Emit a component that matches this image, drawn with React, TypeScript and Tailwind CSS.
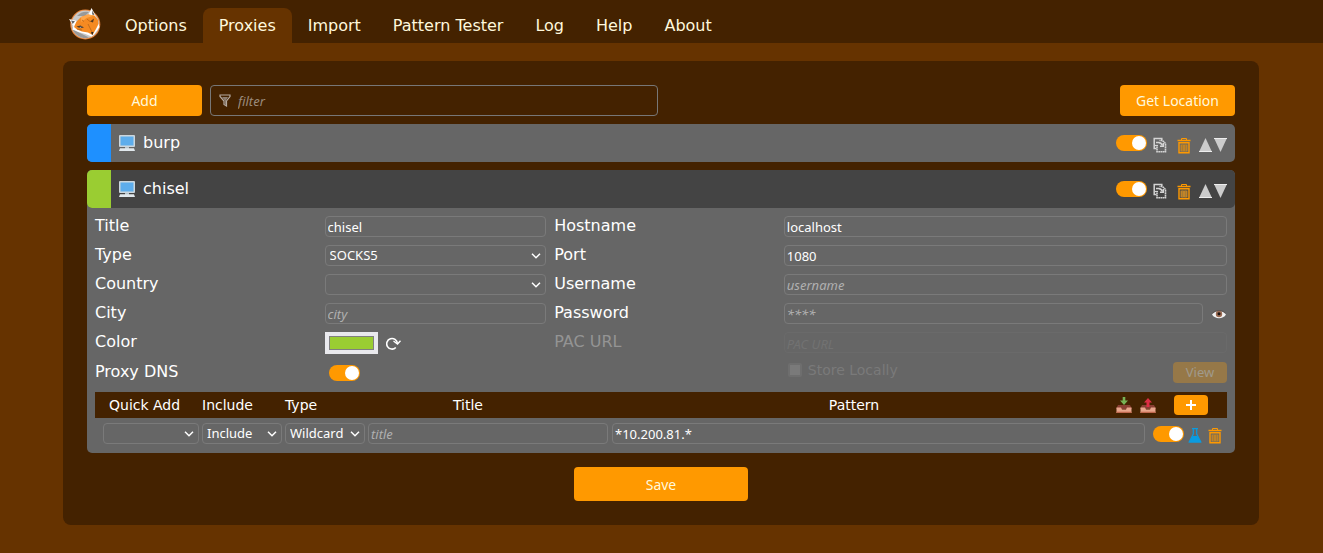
import { useId, useState, type InputHTMLAttributes, type ReactNode } from "react";

const boxClass =
  "block h-[21px] w-full min-w-0 rounded-[4px] border bg-transparent font-['Noto_Sans',sans-serif] text-[13px] leading-[19px] text-white outline-none placeholder:italic";
const fieldClass = `${boxClass} border-[#7a7a7a] pl-[2px] placeholder:text-[#b0b0b0]`;
const buttonClass =
  "rounded-[4px] bg-[#ff9900] font-['Noto_Sans',sans-serif] text-[14px] text-[#fff8dc]";

function FoxLogo() {
  return (
    <svg viewBox="0 0 34 34" className="size-[34px]" aria-hidden="true">
      <circle cx="17.3" cy="17.5" r="15" fill="#e8853b" />
      <circle cx="17.3" cy="17.5" r="13.9" fill="#c9c9c9" />
      <path d="M4 20a13.500 13.500 0 0 0 17 10.500L8 24z" fill="#9a9a9a" />
      <path d="M9 9a12.500 12.500 0 0 1 12-4l-4 4z" fill="#999" />
      <path d="M1 12l8 2-3 6z" fill="#fff" />
      <path d="M3 13.500l4 .8-2.300 2.700z" fill="#666" />
      <path d="M20.500 8l3-7 3.800 7 .3 3z" fill="#fff" />
      <path d="M24.300 3.500l2.200 4.500-2.300-.5z" fill="#555" />
      <path d="M5.500 19l-1 3.500 6 2.500 7 2 6 2.500 3-2.500 5-7-1-3.500z" fill="#fff" />
      <path d="M6 20l2.500-5.500L13 10l7-2.500 6.500 1L30 13l.5 4-2.500 5-3.500 6-4.500-2.500-6-1-5-2z" fill="#f58a22" />
      <path d="M13 10l7-2.500 6.500 1-8 2.500-5 4z" fill="#ffa64a" />
      <path d="M8.500 19.500l4-1 3.500 2-4 .8z" fill="#4a3a2c" />
      <path d="M11 20l3-.3-1.500 1z" fill="#ddd" />
      <path d="M22 14.500l4-3-1 4z" fill="#5a3a20" />
      <path d="M14 13l2 1.500M19 12l3 2.500M20 17l4 8M9 22l5 1" stroke="#b86416" strokeWidth="0.8" fill="none" />
      <path d="M22.800 25.500l2.700-.8-1 3.300z" fill="#222" />
    </svg>
  );
}

function MonitorIcon() {
  return (
    <svg viewBox="0 0 16 16" className="size-4 shrink-0" aria-hidden="true">
      <rect width="16" height="12" rx="1" fill="#ccd6dd" />
      <rect x="1.500" y="1.500" width="13" height="9" fill="#5dadec" />
      <path d="M6 12h4v2H6z" fill="#b8c5cd" />
      <path d="M1 13.200h14l1 2.800H0z" fill="#e1e8ed" />
    </svg>
  );
}

function FilterIcon() {
  return (
    <svg viewBox="0 0 12 13" className="h-[13px] w-3" fill="none" aria-hidden="true">
      <path d="M1 1h10v1.500L7.500 7v5L5 10.500V7L1 2.500z" stroke="#b5aaa0" strokeWidth="1.200" />
      <path d="M3 3h6L7 6.500v5L5.500 10V6.500z" fill="#8a7c70" />
    </svg>
  );
}

function CopyIcon() {
  return (
    <svg viewBox="0 0 14 16" className="h-4 w-3.5" fill="none" stroke="#d4d4d4" aria-hidden="true">
      <path d="M3.500 11.500H1.200v-10h7.600V3" strokeWidth="1.500" />
      <path d="M4 9.500v5.300h8.500V6.500l-3-3H6.500" strokeWidth="1.600" strokeDasharray="1.800 0.400" />
      <path d="M3 5.500h2.500c2 0 3 .8 4 3" strokeWidth="1.600" />
      <path d="M10.300 6v3.200H7" strokeWidth="1.500" />
      <path d="M2 8.500h3" strokeWidth="1.200" />
    </svg>
  );
}

function TrashIcon() {
  return (
    <svg viewBox="0 0 14 17" className="h-[17px] w-3.5" fill="none" stroke="#ff9900" aria-hidden="true">
      <path d="M0.500 3.500h13" strokeWidth="1.500" />
      <path d="M4.500 3V1.500h5V3" strokeWidth="1" />
      <path d="M2 5.800h10v10H2z" strokeWidth="1.400" />
      <path d="M3.500 7.500h7v7h-7z" fill="#c08428" stroke="none" />
      <path d="M5.500 7.500v7M8.500 7.500v7" stroke="#9c7638" strokeWidth="0.700" />
    </svg>
  );
}

function Triangle({ down = false }: { down?: boolean }) {
  return (
    <svg viewBox="0 0 13 14" className="h-3.5 w-[13px]" aria-hidden="true">
      <path d={down ? "M0 0h13L6.500 14z" : "M0 14h13L6.500 0z"} fill="#ccc" />
      <path d={down ? "M0 0.500h13" : "M0 13.500h13"} stroke="#eee" />
    </svg>
  );
}

function ReloadIcon() {
  return (
    <svg viewBox="0 0 15 14" className="h-3.5 w-[15px]" fill="none" stroke="#fff" aria-hidden="true">
      <path d="M9.800 11.500A5.300 5.300 0 1 1 11.300 7.500" strokeWidth="1.600" />
      <path d="M7.500 5l4 3 3-3.200" strokeWidth="1.400" />
    </svg>
  );
}

function EyeIcon() {
  return (
    <svg viewBox="0 0 14 10" className="h-2.5 w-3.5" aria-hidden="true">
      <path d="M0 5.500C3 1 11 1 14 5.500 11 10.500 3 10.500 0 5.500z" fill="#f2f2f2" />
      <circle cx="7" cy="5" r="3.200" fill="#9a6a52" />
      <circle cx="7" cy="4.800" r="1.500" fill="#1d1512" />
      <path d="M0.300 4.500C3 .5 11 .5 13.700 4.500" stroke="#5b524e" strokeWidth="0.800" fill="none" />
    </svg>
  );
}

function TrayIcon({ up = false }: { up?: boolean }) {
  return (
    <svg viewBox="0 0 16 16" className="size-4" aria-hidden="true">
      <path d="M2 8h12l2 4H0z" fill="#8a3f33" />
      <path d="M0.500 10.500h4.500l1 2h4l1-2h4.500V16H.5z" fill="#e8a58c" />
      <path d="M0.500 14.700h15V16H.5z" fill="#c1694f" />
      {up ? (
        <path d="M8 1l4 4.500H9.500V10h-3V5.500H4z" fill="#dd2e44" />
      ) : (
        <path d="M6.700 0h2.600v3.500H12L8 8 4 3.500h2.700z" fill="#77b255" />
      )}
    </svg>
  );
}

function FlaskIcon() {
  return (
    <svg viewBox="0 0 14 15" className="h-[15px] w-3.5" aria-hidden="true">
      <path d="M4 0.700h6M5.300 1v5L1.200 14h11.600L8.700 6V1" fill="none" stroke="#0a9be0" strokeWidth="1.200" />
      <path d="M4.500 8h5l3.500 6.500H1z" fill="#0a9be0" />
    </svg>
  );
}

function Toggle({ label, id }: { label?: string; id?: string }) {
  return (
    <input
      id={id}
      type="checkbox"
      defaultChecked
      aria-label={label}
      className="flex h-4 w-[31px] shrink-0 appearance-none items-center rounded-full bg-[#888] px-px before:size-3.5 before:rounded-full before:bg-white checked:justify-end checked:bg-[#ff9900]"
    />
  );
}

function SelectBox({ id, label, options }: { id?: string; label?: string; options: string[] }) {
  return (
    <div className="relative">
      <select id={id} aria-label={label} className={`${boxClass} appearance-none border-[#7a7a7a] pl-1`}>
        {options.map((option) => (
          <option key={option}>{option}</option>
        ))}
      </select>
      <svg viewBox="0 0 10 6" className="pointer-events-none absolute top-2 right-[5px] h-1.5 w-2.5" fill="none" stroke="#fff" strokeWidth="1.500" aria-hidden="true">
        <path d="M1 0.800l4 4 4-4" />
      </svg>
    </div>
  );
}

function Field({ label, children }: { label: string; children: (id: string) => ReactNode }) {
  const id = useId();
  return (
    <>
      <label htmlFor={id} className="leading-[19px]">{label}</label>
      {children(id)}
    </>
  );
}

function TextField({ label, ...rest }: { label: string } & InputHTMLAttributes<HTMLInputElement>) {
  return <Field label={label}>{(id) => <input id={id} className={fieldClass} {...rest} />}</Field>;
}

function ProxyBar({ title, color, active = false }: { title: string; color: string; active?: boolean }) {
  return (
    <div className={`flex h-[38px] items-center rounded-[5px] pr-2 ${active ? "bg-[#444]" : "bg-[#666]"}`}>
      <span className={`mr-2 h-full w-6 rounded-l-[5px] ${color}`} />
      <MonitorIcon />
      <h2 className="ml-2 flex-1 pb-px leading-[19px]">{title}</h2>
      <Toggle label={`Enable ${title}`} />
      <div className="flex items-center pt-1 pl-1.5">
        <button type="button" aria-label="Duplicate"><CopyIcon /></button>
        <button type="button" aria-label="Delete" className="ml-2.5"><TrashIcon /></button>
        <button type="button" aria-label="Move up" className="ml-2"><Triangle /></button>
        <button type="button" aria-label="Move down" className="ml-0.5"><Triangle down /></button>
      </div>
    </div>
  );
}

function PatternTable() {
  const heading = "p-0 text-left font-normal";
  return (
    <table className="mt-2 w-full table-fixed border-collapse">
      <colgroup>
        <col className="w-[107px]" />
        <col className="w-[83px]" />
        <col className="w-[83px]" />
        <col className="w-[244px]" />
        <col />
        <col className="w-[29px]" />
        <col className="w-[82px]" />
      </colgroup>
      <thead>
        <tr className="h-[26px] bg-[#420] text-[14px]">
          <th className={`${heading} pl-3.5`}>Quick Add</th>
          <th className={heading}>Include</th>
          <th className={heading}>Type</th>
          <th className="p-0 pr-11 font-normal">Title</th>
          <th className="p-0 pr-5 font-normal">Pattern</th>
          <th colSpan={2} className={heading}>
            <div className="flex items-center">
              <button type="button" aria-label="Import patterns"><TrayIcon /></button>
              <button type="button" aria-label="Export patterns" className="ml-2"><TrayIcon up /></button>
              <button type="button" aria-label="Add pattern" className="ml-[18px] flex h-5 w-[34px] items-center justify-center rounded-[4px] bg-[#ff9900]">
                <svg viewBox="0 0 10 10" className="size-2.5" stroke="#fff" strokeWidth="2" aria-hidden="true">
                  <path d="M5 0v10M0 5h10" />
                </svg>
              </button>
            </div>
          </th>
        </tr>
      </thead>
      <tbody>
        <tr className="h-[31px]">
          <td className="p-0 pr-[3px] pl-2"><SelectBox label="Quick add" options={[""]} /></td>
          <td className="p-0 pr-[3px]"><SelectBox label="Include" options={["Include", "Exclude"]} /></td>
          <td className="p-0 pr-[3px]"><SelectBox label="Pattern type" options={["Wildcard", "Reg Exp"]} /></td>
          <td className="p-0 pr-1"><input aria-label="Pattern title" placeholder="title" className={fieldClass} /></td>
          <td className="p-0" colSpan={2}><input aria-label="Pattern" defaultValue="*10.200.81.*" className={fieldClass} /></td>
          <td className="p-0 pl-2">
            <div className="flex items-center">
              <Toggle label="Enable pattern" />
              <button type="button" aria-label="Test pattern" className="ml-1 pt-1"><FlaskIcon /></button>
              <button type="button" aria-label="Delete pattern" className="ml-1.5 pt-1"><TrashIcon /></button>
            </div>
          </td>
        </tr>
      </tbody>
    </table>
  );
}

const tabs = ["Options", "Proxies", "Import", "Pattern Tester", "Log", "Help", "About"];

export default function App() {
  const [tab, setTab] = useState("Proxies");
  const dnsId = useId();
  return (
    <div className="min-h-screen bg-[#630] font-['DejaVu_Sans',sans-serif] text-[16px] text-white">
      <header className="flex h-[43px] items-end bg-[#420] pl-[68px]">
        <span className="mb-0.5"><FoxLogo /></span>
        <nav className="ml-[7px] flex">
          {tabs.map((name) => (
            <a
              key={name}
              href="#"
              onClick={() => setTab(name)}
              className={`flex h-[35px] items-center rounded-t-[8px] px-4 leading-[19px] text-[#fff8dc] ${tab === name ? "bg-[#630]" : ""}`}
            >
              {name}
            </a>
          ))}
        </nav>
      </header>
      <main className="pt-[18px] pr-16 pb-7 pl-[63px]">
        <section className="rounded-[8px] bg-[#420] p-6">
          <div className="flex gap-2">
            <button type="button" className={`${buttonClass} h-[31px] w-[115px]`}>Add</button>
            <div className="flex h-[31px] w-[39%] items-center gap-[7px] rounded-[4px] border border-[#777] px-2">
              <FilterIcon />
              <input
                aria-label="Filter"
                placeholder="filter"
                className="h-full min-w-0 flex-1 bg-transparent pt-px font-['Noto_Sans',sans-serif] text-[13px] outline-none placeholder:text-[#9b8b7c] placeholder:italic"
              />
            </div>
            <button type="button" className={`${buttonClass} ml-auto h-[31px] w-[115px]`}>Get Location</button>
          </div>

          <div className="mt-2"><ProxyBar title="burp" color="bg-[#1e90ff]" /></div>

          <div className="mt-2 rounded-[5px] bg-[#666]">
            <ProxyBar title="chisel" color="bg-[#9acd32]" active />
            <div className="px-2 pt-2 pb-1">
              <div className="grid grid-cols-[1fr_1fr_1fr_2fr] gap-2">
                <TextField label="Title" defaultValue="chisel" />
                <TextField label="Hostname" defaultValue="localhost" />
                <Field label="Type">{(id) => <SelectBox id={id} options={["SOCKS5", "SOCKS4", "HTTP", "HTTPS"]} />}</Field>
                <TextField label="Port" defaultValue="1080" />
                <Field label="Country">{(id) => <SelectBox id={id} options={[""]} />}</Field>
                <TextField label="Username" placeholder="username" />
                <TextField label="City" placeholder="city" />
                <Field label="Password">
                  {(id) => (
                    <div className="flex items-center">
                      <input id={id} type="password" placeholder="****" className={fieldClass} />
                      <button type="button" aria-label="Show password" className="mr-px ml-[9px] shrink-0"><EyeIcon /></button>
                    </div>
                  )}
                </Field>
                <Field label="Color">
                  {(id) => (
                    <div className="flex items-center gap-2">
                      <input
                        id={id}
                        type="color"
                        defaultValue="#9acd32"
                        className="h-[22px] w-[53px] appearance-none bg-[#e9e9ed] p-1 [&::-webkit-color-swatch]:rounded-none [&::-webkit-color-swatch]:border [&::-webkit-color-swatch]:border-[#808080] [&::-webkit-color-swatch-wrapper]:p-0"
                      />
                      <button type="button" aria-label="Random color"><ReloadIcon /></button>
                    </div>
                  )}
                </Field>
                <label htmlFor="pac" className="leading-[19px] text-[#949494]">PAC URL</label>
                <input
                  id="pac"
                  disabled
                  placeholder="PAC URL"
                  className={`${boxClass} border-[#6a6a6a] pt-[2px] pl-[2px] placeholder:text-[#727272]`}
                />
                <label htmlFor={dnsId} className="leading-[19px]">Proxy DNS</label>
                <div className="flex items-center pl-1"><Toggle id={dnsId} /></div>
                <div className="col-start-4 flex items-start justify-between">
                  <label className="flex items-center gap-1.5 pb-1.5 pl-1 text-[14px] leading-4 text-[#7a7a7a]">
                    <input type="checkbox" disabled className="size-3.5 appearance-none rounded-[2px] border-2 border-[#6e6e6e] bg-[#7a7a7a]" />
                    Store Locally
                  </label>
                  <button type="button" disabled className="h-[21px] w-[54px] rounded-[4px] bg-[#967848] font-['Noto_Sans',sans-serif] text-[13px] leading-[21px] text-[#a09a8c]">
                    View
                  </button>
                </div>
              </div>
              <PatternTable />
            </div>
          </div>

          <div className="mt-3.5 flex justify-center">
            <button type="button" className={`${buttonClass} h-[34px] w-[174px]`}>Save</button>
          </div>
        </section>
      </main>
    </div>
  );
}
